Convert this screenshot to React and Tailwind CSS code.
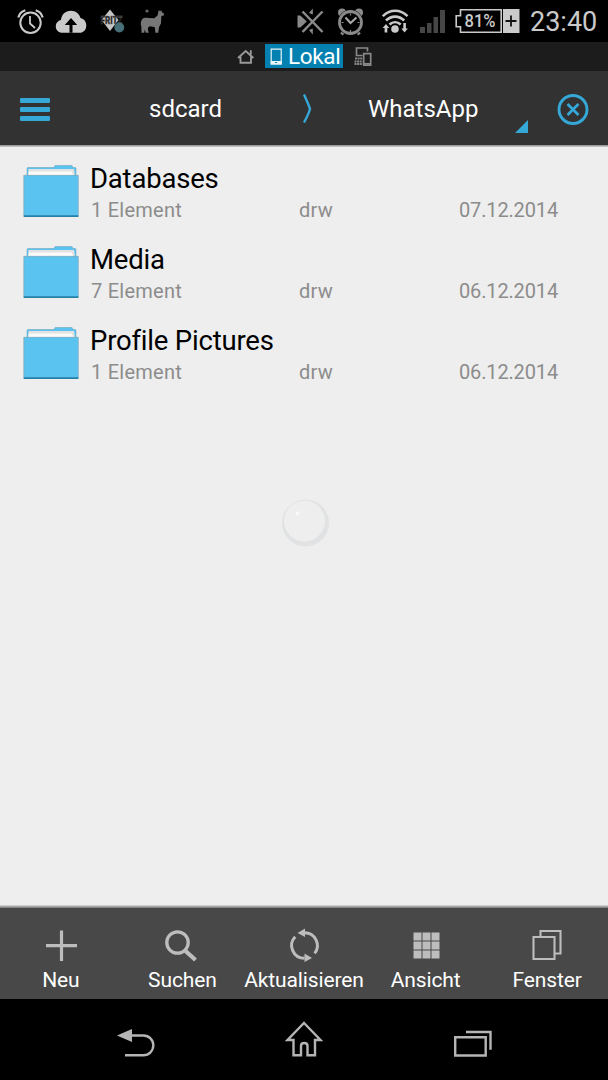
import React from 'react';

const folders = [
  { name: 'Databases', count: '1 Element', perms: 'drw', date: '07.12.2014' },
  { name: 'Media', count: '7 Element', perms: 'drw', date: '06.12.2014' },
  { name: 'Profile Pictures', count: '1 Element', perms: 'drw', date: '06.12.2014' }
];

const StatusBar = () => (
  <div className="flex h-[42px] shrink-0 items-start bg-black pl-[17px] pt-[8px]">
    <svg className="h-[28px] w-[27px] shrink-0" viewBox="17 8 27 28" fill="none" stroke="#cacaca">
      <circle cx="30.5" cy="22.8" r="10.2" strokeWidth="2" />
      <path d="M30 16v7.5l5 4.5" strokeWidth="1.8" />
      <path d="M18.3 17.5c1-3.5 3.5-6.2 7-7.2M42.7 17.5c-1-3.5-3.5-6.2-7-7.2" strokeWidth="2.2" />
    </svg>
    <svg className="ml-[11px] h-[28px] w-[32px] shrink-0" viewBox="55 8 32 28">
      <path
        d="M62.5 32.8C58.5 32.8 55.8 30.2 55.8 26.5C55.8 23 58 20.6 61 20C61.5 14.5 65.5 10.8 70.8 10.8C75.5 10.8 79.3 13.6 80.5 18C84 18.8 86.3 21.7 86.3 25.5C86.3 29.8 83.5 32.8 79.5 32.8Z"
        fill="#cacaca"
      />
      <path d="M71 18l6.2 7h-4.7v7.8h-3V25h-4.7z" fill="#000" />
    </svg>
    <svg className="ml-[9px] h-[28px] w-[32px] shrink-0" viewBox="96 8 32 28">
      <path d="M110 9.5L118.5 20L110 31L101.5 20Z" fill="#c4c4c4" />
      <text x="100.5" y="24" fontFamily="Roboto, sans-serif" fontSize="10" fontWeight="900" textLength="22" lengthAdjust="spacingAndGlyphs" fill="#161616" stroke="#666" strokeWidth="0.3">FRITZ</text>
      <circle cx="119.3" cy="27.5" r="4.9" fill="#477078" />
    </svg>
    <svg className="ml-[12px] h-[28px] w-[24px] shrink-0" viewBox="140 8 24 28">
      <path
        d="M158.8 10l1.2 1.3 1.5-1 .3 2 2.2 1.2-.3 2-2.3.4-.4 7.300-2 4-.7 5.600h-3l-.4-5.500-4.300-1-2.200.7-.6 2 .9 3.800h-2.800l-1.200-3.200-.4 3.200h-2.800l-.1-6.300c-1-1.800-.8-5.400.6-7.100 1.600-1.900 4-1.700 6.800-1.400l5.500.2 3.200-2.700z"
        fill="#777"
      />
      <circle cx="147" cy="11" r="1.600" fill="#666" />
    </svg>

    <svg className="ml-[133px] h-[28px] w-[27px] shrink-0" viewBox="297 8 27 28">
      <path d="M297.5 15.500h2.800l6.500 6-6.500 6h-2.800z M309 13l3.800-4.500v6z M309 30l3.800 4.500v-6z" fill="#8a8a8a" />
      <path d="M302.5 11.500L322.5 32M322.5 11.500L302.5 32" stroke="#000" strokeWidth="4" />
      <path d="M302.5 11.500L322.5 32M322.5 11.500L302.5 32" stroke="#8a8a8a" strokeWidth="2.500" />
    </svg>
    <svg className="ml-[13px] h-[28px] w-[27px] shrink-0" viewBox="337 8 27 28" fill="none">
      <circle cx="342" cy="12.500" r="4" fill="#8a8a8a" />
      <circle cx="359" cy="12.500" r="4" fill="#8a8a8a" />
      <path d="M344.5 30.500l-3 4M356.5 30.500l3 4" stroke="#8a8a8a" strokeWidth="3.200" />
      <circle cx="350.500" cy="22.500" r="12.800" fill="#000" />
      <circle cx="350.500" cy="22.500" r="11" stroke="#8a8a8a" strokeWidth="2.800" fill="#000" />
      <path d="M345.500 17.500l5 5.500 6-5.500" stroke="#aaa" strokeWidth="2" />
      <path d="M350.500 13.500v2M350.500 30v2M341.500 22.500h2M357.500 22.500h2" stroke="#8a8a8a" strokeWidth="1.200" />
    </svg>
    <svg className="ml-[18px] h-[28px] w-[27px] shrink-0" viewBox="382 8 27 28" fill="none">
      <path d="M382.8 16.200c7.200-7.200 17.500-7.200 24.700 0M386 20.500c5.400-5.200 12.800-5.200 18.200 0M389.500 24.500c3.300-3.100 7.900-3.100 11.200 0" stroke="#cacaca" strokeWidth="2.600" />
      <circle cx="395" cy="29" r="3.800" fill="#cacaca" />
      <path d="M386 24l3.300 4h-2v4.500h-2.700V28h-2z M404.500 32.500l-3.200-4h2V23h2.600v5.500h2z" fill="#cacaca" />
    </svg>
    <svg className="ml-[11px] h-[28px] w-[25px] shrink-0" viewBox="420 8 25 28" fill="#464646">
      <path d="M420 27h5v6h-5zM427 23h4.500v10H427zM433.500 17h4.500v16h-4.500zM440 10h5v23h-5z" />
    </svg>
    <svg className="ml-[10px] h-[28px] w-[65px] shrink-0" viewBox="455 8 65 28">
      <path d="M460.500 9.800h40.700v22.400h-40.700v-5.500h-4.300v-11h4.300z" fill="none" stroke="#cacaca" strokeWidth="1.600" />
      <path d="M503 9h16.500v24H503z" fill="#cacaca" />
      <path d="M505.500 21h11M511 15.500v11" stroke="#111" strokeWidth="1.800" />
      <text x="464.500" y="27" fontFamily="Roboto, sans-serif" fontSize="17.500" fontWeight="500" textLength="31" lengthAdjust="spacingAndGlyphs" fill="#cacaca">81%</text>
    </svg>
    <span className="ml-[10px] text-[27px] leading-[28px] text-[#cacaca]">23:40</span>
  </div>
);

const LocationTabs = () => (
  <div className="flex h-[29px] shrink-0 items-start bg-[#1c1c1c] pl-[237px] pt-[2px]">
    <svg className="h-[24px] w-[18px]" viewBox="237 44 18 24" fill="none" stroke="#999" strokeWidth="1.9">
      <path d="M238 58l7.700-7 7.700 7M240.500 56.500v6.300h10.500v-6.300M250.800 54.500v-4.300" />
    </svg>
    <div className="ml-[10px] flex h-[24px] w-[78px] bg-[#0481b0]">
      <svg className="h-[24px] w-[23px]" viewBox="265 44 23 24">
        <path d="M271.200 49.200h10v14.600h-10z" fill="none" stroke="#e8f4f8" strokeWidth="1.200" />
        <path d="M270.700 61h11v3.500h-11z" fill="#e8f4f8" />
        <path d="M275.200 62.500h2" stroke="#0481b0" />
      </svg>
      <span className="text-[22.5px] leading-[25px] tracking-[-0.35px] text-white">Lokal</span>
    </div>
    <svg className="ml-[11px] h-[24px] w-[19px]" viewBox="354 44 19 24" fill="none" stroke="#888" strokeWidth="1.700">
      <path d="M362.500 55.500h-6v-7.500h11v3.500M363.700 53.700h7v11.500h-7z" />
      <path d="M355 58.500h7.500M354.500 61.500h8M354.500 64h8" strokeWidth="2" strokeDasharray="2 .6" />
      <path d="M364 63.800h6.500" />
    </svg>
  </div>
);

const PathBar = () => (
  <div className="flex h-[74px] shrink-0 items-center bg-[#323232] pl-[20px] text-[24px] leading-[32px] text-white">
    <div className="mt-[2px] flex w-[30px] flex-col gap-[4px]">
      <div className="h-[5px] rounded-[1px] bg-[#35a8d8]" />
      <div className="h-[5px] rounded-[1px] bg-[#35a8d8]" />
      <div className="h-[5px] rounded-[1px] bg-[#35a8d8]" />
    </div>
    <span className="ml-[99px] w-[74px] pt-[2px]">sdcard</span>
    <svg className="ml-[79px] h-[30px] w-[10px]" viewBox="302 93 10 30" fill="none" stroke="#35a8d8" strokeWidth="2.400">
      <path d="M304 94.500c2.500 5.500 5 11 6 14.500c-1 3.500-3.500 9-6 13.500" />
    </svg>
    <span className="ml-[56px] w-[112px] pt-[2px]">WhatsApp</span>
    <svg className="ml-[35px] h-[74px] w-[13px]" viewBox="515 71 13 74">
      <path d="M528 120v13h-13z" fill="#35a8d8" />
    </svg>
    <svg className="ml-[29px] mt-[2px] h-[32px] w-[32px]" viewBox="557 93 32 32" fill="none" stroke="#35a8d8">
      <circle cx="573" cy="109.500" r="14" strokeWidth="2.900" />
      <path d="M567.500 104l11 11M578.500 104l-11 11" strokeWidth="2.700" />
    </svg>
  </div>
);

const FolderIcon = () => (
  <svg className="mt-[3px] h-[53px] w-[56px] shrink-0" viewBox="23 165 56 53">
    <path d="M27 176v-7.500q0-1 1-1h26l1-2h17l1 2h2q1 0 1 1V176z" fill="#5ac3f0" stroke="#6f9db1" strokeWidth=".5" />
    <path d="M28.500 169h45.500l1 6.500H28z" fill="#e2e2e2" />
    <path d="M29 171.500h42.500l2 4H28.500z" fill="#fafafa" />
    <path d="M23.800 175.300h54.500v41H23.800z" fill="#5ac3f0" stroke="#7c9dac" strokeWidth=".6" />
    <path d="M23.800 215.300h54.500v1.700H23.800z" fill="#2680a8" />
  </svg>
);

const FolderRow = ({ folder }) => (
  <div className="flex h-[81px] pl-[23px] pt-[15px]">
    <FolderIcon />
    <div className="ml-[11px] flex-1 pt-px">
      <div className="text-[27.5px] leading-[32px] tracking-[-0.2px] text-black">{folder.name}</div>
      <div className="mt-[3px] flex text-[20px] leading-[24px] text-[#8c8c8c]">
        <span className="ml-px w-[208px] tracking-[0.25px]">{folder.count}</span>
        <span className="w-[160px] tracking-[0.25px]">{folder.perms}</span>
        <span className="tracking-[-0.15px]">{folder.date}</span>
      </div>
    </div>
  </div>
);

const ToolButton = ({ label, children }) => (
  <div className="flex flex-1 flex-col items-center pt-[18px]">
    <svg className="h-[40px] w-[40px]" viewBox="0 0 40 40" fill="none" stroke="#bdbdbd">
      {children}
    </svg>
    <span className="mt-px text-[21px] leading-[26px] tracking-[-0.12px] text-white">{label}</span>
  </div>
);

const Toolbar = () => (
  <div className="flex h-[91px] shrink-0 bg-[#484848]">
    <ToolButton label="Neu">
      <path d="M5 19.700h31M20.500 4.500v30.500" strokeWidth="3.200" />
    </ToolButton>
    <ToolButton label="Suchen">
      <circle cx="15.500" cy="16.500" r="10.700" strokeWidth="3.300" />
      <path d="M23 24.500l10.500 9.500" strokeWidth="4.200" />
    </ToolButton>
    <ToolButton label="Aktualisieren">
      <path d="M20.500 6.700A12.800 12.800 0 0 1 30.600 27.400M20.500 32.300A12.800 12.800 0 0 1 11.200 10.700" strokeWidth="3" />
      <path d="M13.500 7l7.500-4.500v8.500zM28 32l-7.500-4.500v8.500z" fill="#bdbdbd" stroke="none" />
    </ToolButton>
    <ToolButton label="Ansicht">
      <path d="M7.500 6.500h8v8h-8zm9 0h8v8h-8zm9 0h8v8h-8zm-18 9h8v8h-8zm9 0h8v8h-8zm9 0h8v8h-8zm-18 9h8v8h-8zm9 0h8v8h-8zm9 0h8v8h-8z" fill="#bdbdbd" stroke="none" />
    </ToolButton>
    <ToolButton label="Fenster">
      <path d="M6.500 11h21v22h-21zM13.500 11V5H33.500v22.500h-6" strokeWidth="2.100" />
    </ToolButton>
  </div>
);

const NavBar = () => (
  <div className="flex h-[81px] shrink-0 items-start bg-black pl-[116px] pt-[20px]">
    <svg className="h-[40px] w-[40px]" viewBox="116 1019 40 40">
      <path d="M117 1035.500l15-6.500v13z" fill="#b5b5b5" />
      <path d="M131 1035.500h12.500a9.800 9.800 0 0 1 0 19.700H125" fill="none" stroke="#b5b5b5" strokeWidth="2.400" />
    </svg>
    <svg className="ml-[128px] h-[40px] w-[40px]" viewBox="284 1019 40 40">
      <path
        d="M304 1023L320.500 1040H315V1055.300H307.500V1046Q307.500 1043 304.200 1043Q301 1043 301 1046V1055.300H293.500V1040H287.500Z"
        fill="none" stroke="#b5b5b5" strokeWidth="2.400"
      />
    </svg>
    <svg className="ml-[129px] h-[40px] w-[40px]" viewBox="453 1019 40 40" fill="none" stroke="#b5b5b5" strokeWidth="2.400">
      <path d="M455.200 1037.300h30.500v18.200h-30.500zM466 1032h24.500v17.800" />
    </svg>
  </div>
);

const App = () => (
  <div className="flex h-[1080px] w-[608px] flex-col overflow-hidden bg-[#eeeeee] font-['Roboto',sans-serif]">
    <StatusBar />
    <LocationTabs />
    <PathBar />
    <div className="h-[2px] shrink-0 bg-gradient-to-b from-[#8c8c8c] to-[#cfcfcf]" />
    <div className="flex flex-1 flex-col">
      {folders.map((folder) => (
        <FolderRow key={folder.name} folder={folder} />
      ))}
      {/* Floating touch bubble */}
      <svg className="ml-[281px] mt-[108px] h-[49px] w-[49px]" viewBox="281 498 49 49">
        <circle cx="305.500" cy="523" r="23.500" fill="#e0e2e3" />
        <circle cx="304.500" cy="521" r="20.500" fill="#eeeeee" />
        <ellipse cx="297.500" cy="513.500" rx="1.500" ry="2.700" fill="#fafafa" transform="rotate(40 297.500 513.500)" />
      </svg>
    </div>
    <div className="h-[3px] shrink-0 bg-gradient-to-b from-[#dedede] to-[#777]" />
    <Toolbar />
    <NavBar />
  </div>
);

export default App;
